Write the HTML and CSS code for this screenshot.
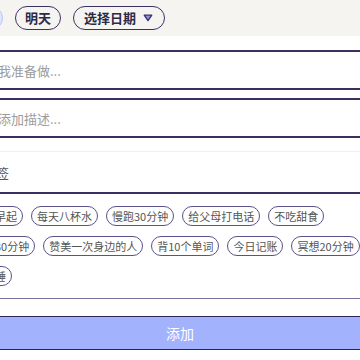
FILE: index.html
```html
<!DOCTYPE html>
<html lang="zh-CN">
<head>
  <meta charset="UTF-8">
  <title>添加习惯</title>
  <link rel="stylesheet" href="styles.css">
</head>
<body>

  <div class="page">
    <div class="day-bar">
      <button class="day-pill active">今天</button>
      <button class="day-pill">明天</button>
      <button class="day-pill date-pill">
        选择日期
        <svg width="10" height="8" viewBox="0 0 10 8">
          <path d="M1.2 1.2 H8.8 L5 6.6 Z" fill="#8b90e6" stroke="#3b3163" stroke-width="1.3" stroke-linejoin="round"/>
        </svg>
      </button>
    </div>

    <form class="habit-form">
      <input class="field" type="text" placeholder="我准备做...">
      <input class="field" type="text" placeholder="添加描述...">
      <div class="tag-field">标签</div>

      <div class="chips" id="chips"></div>

      <button type="button" class="add-btn">添加</button>
    </form>
  </div>

  <script>
    const suggestions = [
      "早睡早起", "每天八杯水", "慢跑30分钟", "给父母打电话", "不吃甜食",
      "阅读30分钟", "赞美一次身边的人", "背10个单词", "今日记账", "冥想20分钟",
      "早点睡"
    ];

    const chips = document.getElementById('chips');
    suggestions.forEach(text => {
      chips.insertAdjacentHTML('beforeend', `<span class="chip">${text}</span>`);
    });
  </script>

</body>
</html>
```

FILE: styles.css
```css
body {
  margin: 0;
  overflow: hidden;
  background-color: #fff;
  font-family: "Noto Sans CJK SC", "Noto Sans", sans-serif;
  color: #333;
}

.page {
  width: 480px;
  margin-left: -60px;
}

.day-bar {
  display: flex;
  align-items: center;
  gap: 12px;
  height: 35px;
  padding: 0 16px 1px 17px;
  background-color: #f5f4f0;
}

.day-pill {
  display: flex;
  align-items: center;
  gap: 7px;
  height: 24px;
  padding: 0 9px;
  border: 1.5px solid #3b3163;
  border-radius: 12px;
  background: transparent;
  font-family: inherit;
  font-size: 13px;
  font-weight: 700;
  color: #2d2a48;
}

.day-pill.active {
  background-color: #dfe6fd;
  border-color: #b9c4f6;
}

.date-pill {
  padding: 0 11px 0 10px;
}

.habit-form {
  display: flex;
  flex-direction: column;
  padding: 14px 16px 0;
}

.field {
  box-sizing: border-box;
  height: 40px;
  padding: 0 12px 0 40px;
  border: 2px solid #3a3162;
  border-radius: 8px;
  font-family: inherit;
  font-size: 13px;
  color: #333;
  outline: none;
}

.field + .field {
  margin-top: 8px;
}

.field::placeholder {
  color: #9d9d9d;
}

.tag-field {
  box-sizing: border-box;
  height: 43px;
  margin-top: 13px;
  padding-left: 27px;
  border-top: 1px solid #efefef;
  border-bottom: 2px solid #3a3162;
  display: flex;
  align-items: center;
  font-size: 13px;
  color: #555;
}

.chips {
  display: flex;
  flex-wrap: wrap;
  gap: 10px 8px;
  margin-top: 12px;
  padding: 0 7px 12px 11px;
  border-bottom: 1px solid #77709a;
}

.chip {
  height: 18px;
  line-height: 18px;
  padding: 0 5px;
  border: 1.5px solid #5b5288;
  border-radius: 11px;
  font-size: 11px;
  color: #555;
  white-space: nowrap;
}

.add-btn {
  height: 34px;
  margin-top: 17px;
  border: 1.5px solid #2b2352;
  border-radius: 8px;
  background-color: #a2b2fc;
  font-family: inherit;
  font-size: 14px;
  color: #fff;
}
```
